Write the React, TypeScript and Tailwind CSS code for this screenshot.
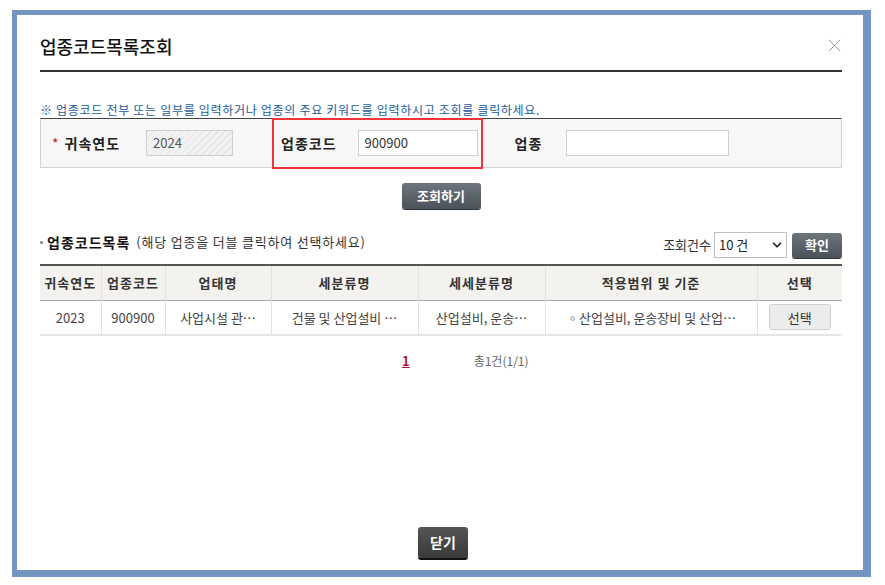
import { ChevronDown, X } from "lucide-react";

const columns = [
  { label: "귀속연도", w: "w-[61px]" },
  { label: "업종코드", w: "w-[64px]" },
  { label: "업태명", w: "w-[106px]" },
  { label: "세분류명", w: "w-[147px]" },
  { label: "세세분류명", w: "w-[127px]" },
  { label: "적용범위 및 기준", w: "w-[212px]" },
  { label: "선택", w: "w-[85px]" },
];

// cells show the grid's shortened text
const rows = [
  {
    year: "2023",
    code: "900900",
    bizType: "사업시설 관…",
    detail: "건물 및 산업설비 …",
    subDetail: "산업설비, 운송…",
    scope: "◦산업설비, 운송장비 및 산업…",
  },
];

function DarkButton({ children, className = "" }: { children: React.ReactNode; className?: string }) {
  return (
    <button
      type="button"
      className={`rounded-[3px] bg-gradient-to-b from-[#6d757e] to-[#4b525a] text-[13px] font-bold text-white shadow-[0_1px_0_#2f343a] ${className}`}
    >
      {children}
    </button>
  );
}

export default function App() {
  return (
    <div className="h-[585px] w-[885px] bg-white font-['Noto_Sans_CJK_KR','Noto_Sans',sans-serif] text-[#333]">
      <div className="h-[10px]" />
      <div className="ml-[12px] flex h-[567px] w-[859px] flex-col border-t-[5px] border-r-[8px] border-b-[7px] border-l-[5px] border-[#7395c2] bg-white pl-[23px] pr-[21px]">
        {/* Header */}
        <div className="flex h-[55px] items-start justify-between pt-[19px]">
          <h1 className="text-[18px] leading-[24px] font-medium text-[#111]">업종코드목록조회</h1>
          <X className="mt-[1px] mr-[-3px] h-[21px] w-[21px] text-[#8a8a8a]" strokeWidth={1} />
        </div>
        <div className="h-[2px] bg-[#333]" />

        {/* Guide */}
        <p className="pt-[30px] text-[12px] leading-[16px] tracking-[0.7px] text-[#1c5ba0]">
          ※ 업종코드 전부 또는 일부를 입력하거나 업종의 주요 키워드를 입력하시고 조회를 클릭하세요.
        </p>

        {/* Search box */}
        <div className="relative flex h-[50px] items-center border border-t-[#444] border-x-[#d3d3d3] border-b-[#d3d3d3] bg-[#f7f7f7] text-[14px]">
          <span className="ml-[11px] text-[#c0282d]">*</span>
          <span className="ml-[6px] font-bold tracking-[1px] text-[#222]">귀속연도</span>
          <div className="ml-[26px] flex h-[26px] w-[87px] items-center border border-[#cfcfcf] bg-[repeating-linear-gradient(135deg,#e3e3e3_0,#e3e3e3_1px,#f2f2f2_1px,#f2f2f2_5px)] pl-[6px] text-[13px] text-[#555]">
            2024
          </div>
          <span className="ml-[48px] font-bold tracking-[1px] text-[#222]">업종코드</span>
          <div className="ml-[21px] flex h-[26px] w-[120px] items-center border border-[#cfcfcf] bg-white pl-[6px] text-[13px] text-[#333]">
            900900
          </div>
          <span className="ml-[37px] font-bold tracking-[1px] text-[#222]">업종</span>
          <div className="ml-[24px] h-[26px] w-[163px] border border-[#cfcfcf] bg-white" />
          <div className="absolute top-[-1px] left-[231px] h-[51px] w-[211px] border-2 border-[#f0343a]" />
        </div>

        <div className="mt-[15px] flex justify-center">
          <DarkButton className="h-[26px] w-[79px]">조회하기</DarkButton>
        </div>

        {/* List header */}
        <div className="mt-[23px] flex h-[26px] items-center justify-between">
          <div className="flex items-center pb-[6px]">
            <span className="mr-[4px] h-[3px] w-[3px] bg-[#999]" />
            <span className="text-[14px] font-bold tracking-[1px] text-[#111]">업종코드목록</span>
            <span className="ml-[6px] text-[13px] tracking-[0.8px] text-[#333]">(해당 업종을 더블 클릭하여 선택하세요)</span>
          </div>
          <div className="flex items-center">
            <span className="text-[13px] text-[#333]">조회건수</span>
            <div className="ml-[3px] flex h-[26px] w-[73px] items-center justify-between border border-[#bfbfbf] bg-white pr-[2px] pl-[4px] text-[13px] text-[#222]">
              <span>10 건</span>
              <ChevronDown className="h-[14px] w-[14px] text-[#222]" strokeWidth={3} />
            </div>
            <DarkButton className="ml-[5px] h-[25px] w-[50px]">확인</DarkButton>
          </div>
        </div>

        {/* Table */}
        <table className="mt-[6px] w-[802px] table-fixed border-collapse text-[13px]">
          <thead>
            <tr className="h-[35px] border-t-2 border-b border-t-[#555] border-b-[#aaa] bg-[#f3f2ef]">
              {columns.map((c, i) => (
                <th
                  key={c.label}
                  className={`${c.w} px-0 font-bold tracking-[1px] text-[#333] ${i > 0 ? "border-l border-l-[#e2e2e2]" : ""}`}
                >
                  {c.label}
                </th>
              ))}
            </tr>
          </thead>
          <tbody>
            {rows.map((r) => (
              <tr key={r.code} className="h-[35px] border-b-2 border-b-[#e6e6e6] text-[#444]">
                <td className="text-center">{r.year}</td>
                <td className="border-l border-l-[#e2e2e2] text-center">{r.code}</td>
                <td className="border-l border-l-[#e2e2e2] text-center whitespace-nowrap">{r.bizType}</td>
                <td className="border-l border-l-[#e2e2e2] text-center whitespace-nowrap">{r.detail}</td>
                <td className="border-l border-l-[#e2e2e2] text-center whitespace-nowrap">{r.subDetail}</td>
                <td className="border-l border-l-[#e2e2e2] text-center whitespace-nowrap">{r.scope}</td>
                <td className="border-l border-l-[#e2e2e2] text-center">
                  <button
                    type="button"
                    className="h-[26px] w-[62px] rounded-[3px] border border-[#d0d0d0] bg-[#ececec] text-[13px] text-[#333]"
                  >
                    선택
                  </button>
                </td>
              </tr>
            ))}
          </tbody>
        </table>

        {/* Paging */}
        <div className="mt-[17px] flex h-[16px] items-center text-[12px] leading-[16px]">
          <span className="ml-[362px] text-[13px] font-bold text-[#b3123c] underline">1</span>
          <span className="ml-[64px] text-[#666]">총1건(1/1)</span>
        </div>

        <div className="mt-auto mb-[12px] flex justify-center pl-[4px]">
          <button
            type="button"
            className="h-[31px] w-[50px] rounded-[3px] bg-gradient-to-b from-[#555] to-[#3a3a3a] text-[14px] font-bold text-white shadow-[0_2px_0_#111]"
          >
            닫기
          </button>
        </div>
      </div>
    </div>
  );
}
